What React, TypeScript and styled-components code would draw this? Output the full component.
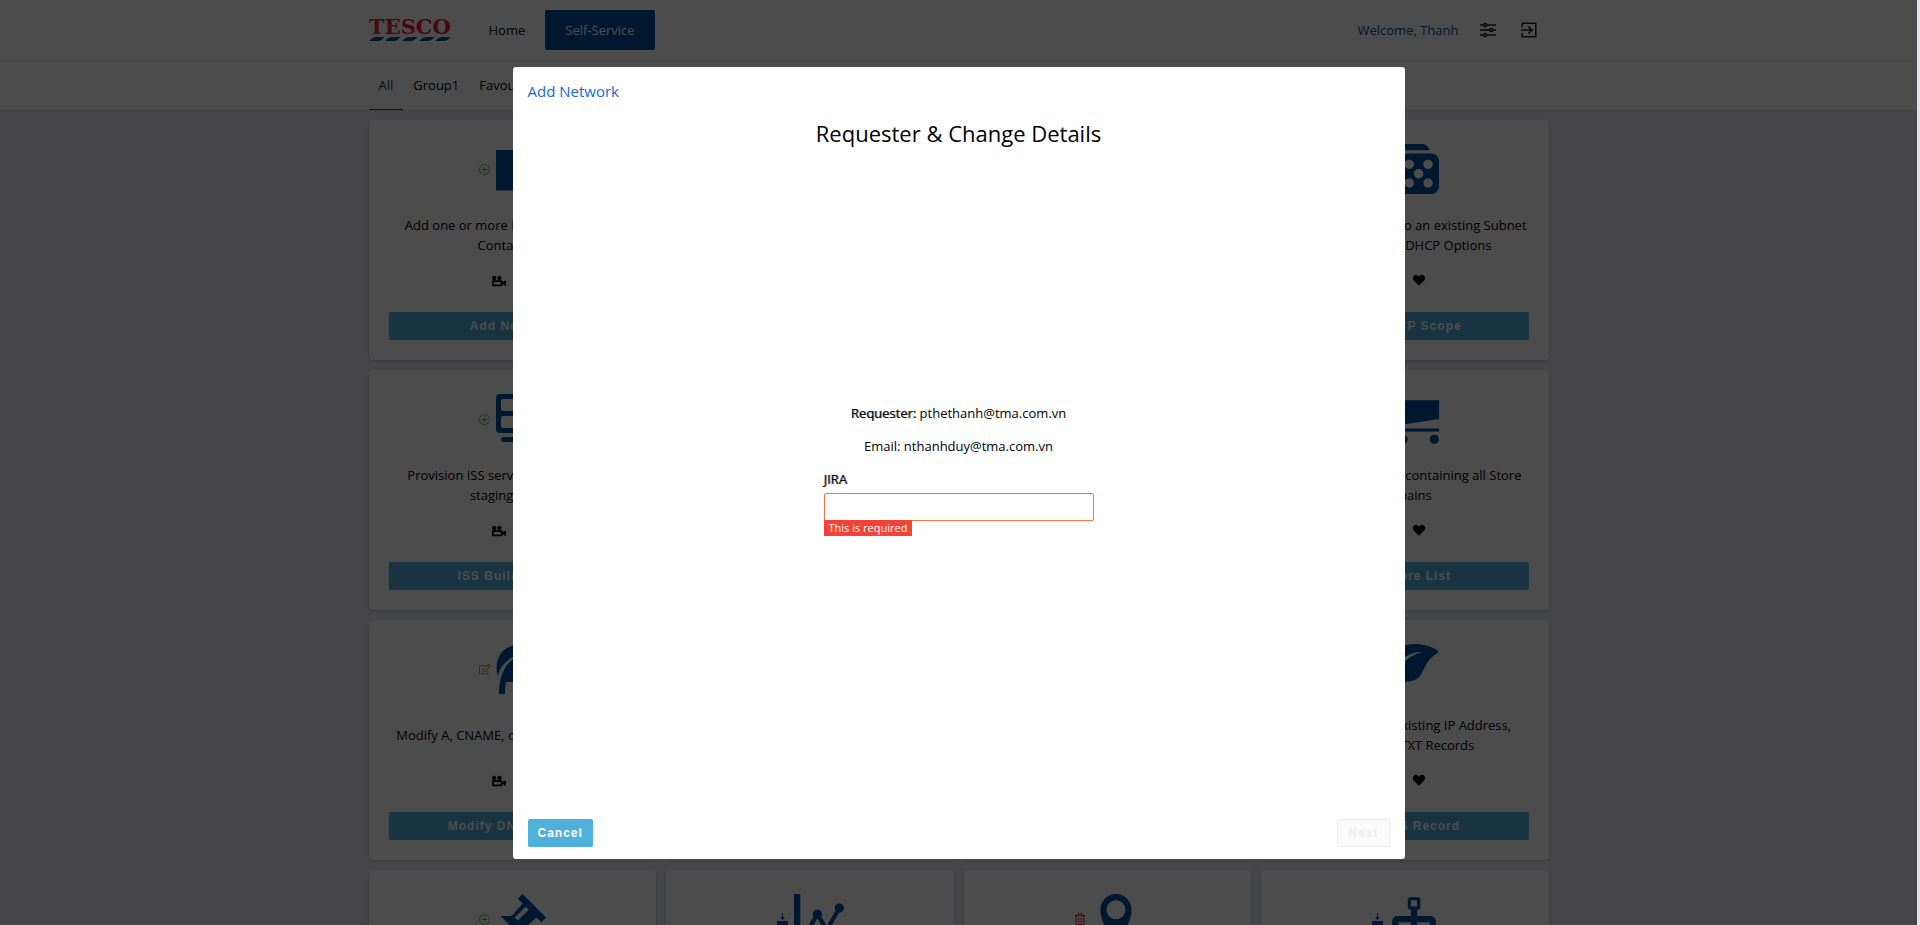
import React from 'react';
import styled, { createGlobalStyle } from 'styled-components';
import {
  ImCart, ImDice, ImHeart, ImLeaf, ImLocation, ImPushpin, ImStatsDots, ImTree, ImVideoCamera,
} from 'react-icons/im';
import { IoIosAddCircleOutline } from 'react-icons/io';
import { FaRegEdit, FaRegTrashAlt } from 'react-icons/fa';

const GlobalStyle = createGlobalStyle`
  * { box-sizing: border-box; }
  body {
    margin: 0;
    background: #e1e1e8;
    color: #000;
    font: 13px/20px "Open Sans", "Noto Sans", sans-serif;
  }
`;

const Shell = styled.div`
  height: 100vh;
  margin-right: 3px;
  overflow: hidden;
  background: #e9ecf1;
`;

const Container = styled.div`
  max-width: 1180px;
  margin: 0 auto;
  display: flex;
  align-items: center;
`;

const TopBar = styled.header`
  background: #fff;
  border-bottom: 1px solid #e6e6e6;
`;

const TopBarInner = styled(Container)`
  height: 60px;
`;

const Logo = styled.svg`
  display: block;
  margin-right: 17px;
`;

const MainNav = styled.nav`
  display: flex;
`;

const MainLink = styled.a<{ $active?: boolean }>`
  padding: 10px 20px;
  border-radius: 2px;
  text-decoration: none;
  color: ${p => (p.$active ? '#fff' : '#000')};
  background: ${p => (p.$active ? '#00539f' : 'transparent')};
`;

const UserArea = styled.div`
  display: flex;
  align-items: center;
  gap: 21px;
  margin-left: auto;
  padding-right: 12px;
  color: #00539f;
`;

const IconButton = styled.button`
  display: flex;
  padding: 0;
  border: 0;
  background: none;
  color: #222;
`;

const UserActions = styled.div`
  display: flex;
  gap: 25px;
`;

const TabBar = styled.nav`
  background: #fff;
  border-bottom: 1px solid #d8dadd;
`;

const Tab = styled.a<{ $active?: boolean }>`
  height: 49px;
  padding: 14px 10px;
  border-bottom: 1px solid ${p => (p.$active ? '#00539f' : 'transparent')};
  color: ${p => (p.$active ? '#1c4a75' : '#000')};
  text-decoration: none;
`;

const CardGrid = styled.main`
  max-width: 1180px;
  margin: 9px auto 0;
  display: grid;
  grid-template-columns: repeat(4, 1fr);
  gap: 10px;
`;

const Card = styled.article`
  height: 240px;
  padding: 24px 20px 20px;
  display: flex;
  flex-direction: column;
  border-radius: 4px;
  background: #fff;
  box-shadow: 0 1px 3px rgba(0, 0, 0, 0.2);
`;

const CardIcons = styled.div`
  display: flex;
  align-items: center;
  justify-content: center;
  gap: 5px;
  color: #00539f;
`;

const Badge = styled.span<{ $color: string }>`
  display: flex;
  color: ${p => p.$color};
`;

const CardText = styled.p`
  flex: 1;
  margin: 0;
  padding-top: 2px;
  display: flex;
  flex-direction: column;
  align-items: center;
  justify-content: center;
  white-space: nowrap;
`;

const CardActions = styled.div`
  display: flex;
  justify-content: center;
  gap: 14px;
  margin-bottom: 24px;
`;

const Button = styled.button`
  height: 28px;
  padding: 0 10px;
  border: 0;
  border-radius: 2px;
  background: #50b0dc;
  color: #fff;
  font: 700 12px/28px "Liberation Sans", Arial, sans-serif;
  letter-spacing: 1px;

  &:disabled {
    border: 1px solid #ebebeb;
    background: #fafafa;
    color: #ededed;
    line-height: 26px;
  }
`;

const Overlay = styled.div`
  position: fixed;
  inset: 0 3px 0 0;
  display: flex;
  justify-content: center;
  padding: 67px 0 66px;
  background: rgba(0, 0, 0, 0.7);
`;

const Modal = styled.section`
  width: 892px;
  max-width: 100%;
  padding: 14px 15px 12px;
  display: flex;
  flex-direction: column;
  border-radius: 3px;
  background: #fff;
`;

const ModalTitle = styled.h2`
  margin: 0;
  color: #1967d2;
  font-size: 15px;
  line-height: 20px;
  font-weight: 400;
`;

const StepTitle = styled.h3`
  margin: 17px 0 0;
  font-size: 22px;
  line-height: 30px;
  font-weight: 400;
  text-align: center;
`;

const Form = styled.form`
  flex: 1;
  display: flex;
  flex-direction: column;
  align-items: center;
  justify-content: center;
  padding-bottom: 29px;
`;

const Info = styled.p`
  margin: 0 0 13px;
`;

const Strong = styled.span`
  text-shadow: 1px 0 0 rgba(0, 0, 0, 0.5);
`;

const Field = styled.div`
  width: 270px;
  display: flex;
  flex-direction: column;
  align-items: flex-start;
`;

const Label = styled.label`
  margin-bottom: 4px;
  text-shadow: 1px 0 0 rgba(0, 0, 0, 0.5);
`;

const Input = styled.input`
  width: 100%;
  height: 28px;
  padding: 0 8px;
  border: 1px solid #ff7043;
  border-radius: 2px;
  outline: 0;
  font: inherit;
`;

const FieldError = styled.span`
  margin-top: -1px;
  padding: 0 5px;
  background: #f44336;
  color: #fff;
  font-size: 11px;
  line-height: 16px;
`;

const Footer = styled.footer`
  display: flex;
  justify-content: space-between;
`;

const TescoLogo = () => (
  <Logo width="83" height="24" viewBox="0 0 83 24" role="img" aria-label="Tesco">
    <text x="0" y="16" fontFamily="DejaVu Serif" fontWeight="700" fontSize="21" fill="#ee1c2e">TESCO</text>
    {[0, 16, 33, 50, 66].map(x => (
      <path key={x} d={`M${x} 23 q3 -3.600 6.500 -4 h9 q-3 3.600 -6 4z`} fill="#00539f" />
    ))}
  </Logo>
);

const SlidersIcon = () => (
  <svg width="16" height="16" viewBox="0 0 16 16" fill="none" stroke="currentColor" strokeWidth="1.5">
    <path d="M0 3h3.500M7 3h9M0 8h9.500M13 8h3M0 13h3.500M7 13h9" />
    <circle cx="5.2" cy="3" r="1.5" />
    <circle cx="11.2" cy="8" r="1.5" />
    <circle cx="5.2" cy="13" r="1.5" />
  </svg>
);

const ExitIcon = () => (
  <svg width="16" height="16" viewBox="0 0 16 16" fill="none" stroke="currentColor" strokeWidth="1.5">
    <path d="M1.200 5V1.200h13.600v13.600H1.200V11M0 8h10.500M7.500 4.600L11 8l-3.500 3.400" />
  </svg>
);

const NetworkIcon = () => (
  <svg width="50" height="50" viewBox="0 0 50 50" fill="currentColor">
    <path d="M0 6h50v40.500H0z" />
  </svg>
);

const ServerIcon = () => (
  <svg width="50" height="50" viewBox="0 0 50 50" fill="currentColor">
    <path fillRule="evenodd" d="M4 0h42a4 4 0 0 1 4 4v31a4 4 0 0 1-4 4H4a4 4 0 0 1-4-4V4a4 4 0 0 1 4-4zM7 5a2 2 0 0 0-2 2v8a2 2 0 0 0 2 2h36a2 2 0 0 0 2-2V7a2 2 0 0 0-2-2zM7 22a2 2 0 0 0-2 2v8a2 2 0 0 0 2 2h36a2 2 0 0 0 2-2v-8a2 2 0 0 0-2-2z" />
    <rect x="5" y="43" width="40" height="5" rx="2.5" />
  </svg>
);

const ArchIcon = () => (
  <svg width="50" height="50" viewBox="0 0 50 50" fill="currentColor">
    <path d="M1.500 32C-2 15 5 3 20 1c18-3 30 9 30 24v7C46 18 34 10 22 11 12 14 5 21 1.500 32z" />
    <path d="M3 50C3 34 8 20 20 13c16-2 27 12 27 37h-7c0-5 0-9-1-12H10c-1 4-1 8-1 12z" />
  </svg>
);

const ImportIcon = () => (
  <svg width="13" height="13" viewBox="0 0 13 13" fill="currentColor">
    <path d="M6 0h1v4h2L6.500 7 4 4h2zM1 8h11v5H1z" />
  </svg>
);

const addBadge = { color: '#3cb54a', icon: <IoIosAddCircleOutline size={13} /> };
const editBadge = { color: '#e8892b', icon: <FaRegEdit size={12} /> };
const deleteBadge = { color: '#e02848', icon: <FaRegTrashAlt size={12} /> };
const importBadge = { color: '#1a4fc4', icon: <ImportIcon /> };

const cards = [
  { badge: addBadge, icon: <NetworkIcon />, lines: ['Add one or more Networks to IPAM', 'Containers.'], action: 'Add Network' },
  { badge: addBadge, icon: <ImTree size={50} />, lines: ['Add a Subnet to an existing', 'Network'], action: 'Add Subnet' },
  { badge: addBadge, icon: <ImStatsDots size={50} />, lines: ['Add an IP Address to an', 'existing Subnet'], action: 'Add IP Address' },
  { badge: addBadge, icon: <ImDice size={50} />, lines: ['Add a DHCP Scope to an existing Subnet', 'with standard DHCP Options'], action: 'Add DHCP Scope' },
  { badge: addBadge, icon: <ServerIcon />, lines: ['Provision ISS servers into the store', 'staging server'], action: 'ISS Build Server' },
  { badge: addBadge, icon: <ImLocation size={50} />, lines: ['Add a new Store location'], action: 'Add Store' },
  { badge: editBadge, icon: <ImTree size={50} />, lines: ['Modify an existing Network'], action: 'Modify Network' },
  { badge: importBadge, icon: <ImCart size={50} />, lines: ['Download a report containing all Store', 'Domains'], action: 'Get Store List' },
  { badge: editBadge, icon: <ArchIcon />, lines: ['Modify A, CNAME, or TXT DNS Records'], action: 'Modify DNS Record' },
  { badge: addBadge, icon: <ImPushpin size={50} />, lines: ['Add a Fixed IP Address'], action: 'Add Fixed IP' },
  { badge: editBadge, icon: <ImLocation size={50} />, lines: ['Modify a Store location'], action: 'Modify Store' },
  { badge: deleteBadge, icon: <ImLeaf size={50} />, lines: ['Delete records: existing IP Address,', 'CNAME or TXT Records'], action: 'Add DNS Record' },
  { badge: addBadge, icon: <ImPushpin size={50} />, lines: ['Reserve an IP Address'], action: 'Reserve IP' },
  { badge: importBadge, icon: <ImStatsDots size={50} />, lines: ['Download Network statistics'], action: 'Get Statistics' },
  { badge: deleteBadge, icon: <ImLocation size={50} />, lines: ['Delete a Store location'], action: 'Delete Store' },
  { badge: importBadge, icon: <ImTree size={50} />, lines: ['Download the Network tree'], action: 'Get Networks' },
];

export default function App() {
  return (
    <>
      <GlobalStyle />
      <Shell>
        <TopBar>
          <TopBarInner>
            <TescoLogo />
            <MainNav>
              <MainLink href="#home">Home</MainLink>
              <MainLink href="#self-service" $active>Self-Service</MainLink>
            </MainNav>
            <UserArea>
              <span>Welcome, Thanh</span>
              <UserActions>
                <IconButton aria-label="Settings"><SlidersIcon /></IconButton>
                <IconButton aria-label="Log out"><ExitIcon /></IconButton>
              </UserActions>
            </UserArea>
          </TopBarInner>
        </TopBar>
        <TabBar>
          <Container>
            <Tab href="#all" $active>All</Tab>
            <Tab href="#group1">Group1</Tab>
            <Tab href="#favourite">Favourite</Tab>
          </Container>
        </TabBar>
        <CardGrid>
          {cards.map(card => (
            <Card key={card.action}>
              <CardIcons>
                <Badge $color={card.badge.color}>{card.badge.icon}</Badge>
                {card.icon}
              </CardIcons>
              <CardText>
                {card.lines.map(line => <span key={line}>{line}</span>)}
              </CardText>
              <CardActions>
                <IconButton aria-label="Watch video"><ImVideoCamera size={14} color="#000" /></IconButton>
                <IconButton aria-label="Favourite"><ImHeart size={12} color="#000" /></IconButton>
              </CardActions>
              <Button>{card.action}</Button>
            </Card>
          ))}
        </CardGrid>
      </Shell>
      <Overlay>
        <Modal role="dialog" aria-modal="true" aria-labelledby="modal-title">
          <ModalTitle id="modal-title">Add Network</ModalTitle>
          <StepTitle>Requester &amp; Change Details</StepTitle>
          <Form>
            <Info><Strong>Requester:</Strong> pthethanh@tma.com.vn</Info>
            <Info>Email: nthanhduy@tma.com.vn</Info>
            <Field>
              <Label htmlFor="jira">JIRA</Label>
              <Input id="jira" type="text" aria-invalid="true" aria-describedby="jira-error" />
              <FieldError id="jira-error">This is required</FieldError>
            </Field>
          </Form>
          <Footer>
            <Button type="button">Cancel</Button>
            <Button type="button" disabled>Next</Button>
          </Footer>
        </Modal>
      </Overlay>
    </>
  );
}
